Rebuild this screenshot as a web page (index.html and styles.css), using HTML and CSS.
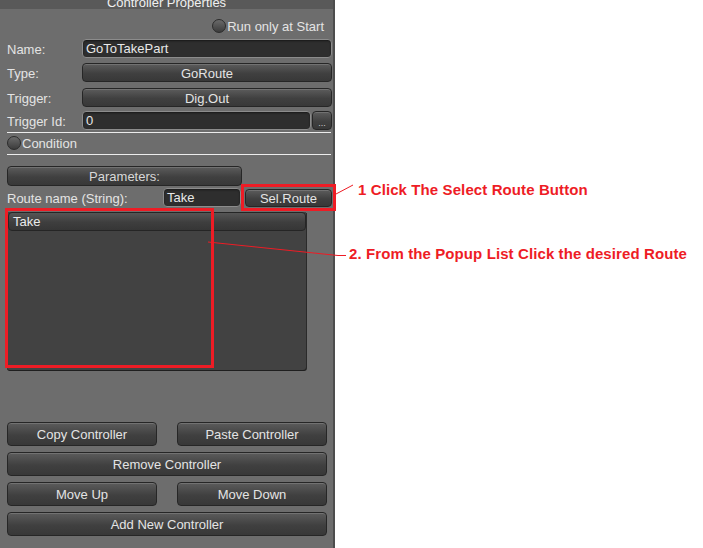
FILE: index.html
```html
<!DOCTYPE html>
<html>
<head>
<meta charset="utf-8">
<link rel="stylesheet" href="styles.css">
</head>
<body>
<div class="page">
  <div class="panel">
    <div class="header"><span class="title">Controller Properties</span></div>
    <div class="content">
      <div class="row run-row">
        <span class="check"></span><span class="lbl">Run only at Start</span>
      </div>
      <div class="row field-row r-name">
        <span class="lbl label">Name:</span>
        <div class="field">GoToTakePart</div>
      </div>
      <div class="row field-row r-type">
        <span class="lbl label">Type:</span>
        <div class="btn wide">GoRoute</div>
      </div>
      <div class="row field-row r-trigger">
        <span class="lbl label">Trigger:</span>
        <div class="btn wide">Dig.Out</div>
      </div>
      <div class="row field-row r-tid">
        <span class="lbl label">Trigger Id:</span>
        <div class="field grow">0</div>
        <div class="btn dots">...</div>
      </div>
      <div class="sep sep1"></div>
      <div class="row cond-row">
        <span class="check"></span><span class="lbl">Condition</span>
      </div>
      <div class="sep sep2"></div>
      <div class="btn params">Parameters:</div>
      <div class="row route-row">
        <span class="lbl route-label">Route name (String):</span>
        <div class="field route-field">Take</div>
        <div class="btn selroute">Sel.Route</div>
      </div>
      <div class="list">
        <div class="item">Take</div>
      </div>
      <div class="actions">
        <div class="pair">
          <div class="btn act half">Copy Controller</div>
          <div class="btn act half">Paste Controller</div>
        </div>
        <div class="btn act full">Remove Controller</div>
        <div class="pair">
          <div class="btn act half">Move Up</div>
          <div class="btn act half">Move Down</div>
        </div>
        <div class="btn act full">Add New Controller</div>
      </div>
    </div>
  </div>

  <div class="mark mark-sel"></div>
  <div class="mark mark-list"></div>
  <svg class="lines" width="703" height="548" viewBox="0 0 703 548">
    <polyline points="336,194 353,185" fill="none" stroke="#ee1c25" stroke-width="1"/>
    <polyline points="208,242 338,255.5 346,255.5" fill="none" stroke="#ee1c25" stroke-width="1"/>
  </svg>
  <div class="note note1">1 Click The Select Route Button</div>
  <div class="note note2">2. From the Popup List Click the desired Route</div>
</div>
</body>
</html>
```

FILE: styles.css
```css
html, body {
  margin: 0;
  padding: 0;
  background: #ffffff;
}

.page {
  position: relative;
  width: 703px;
  height: 548px;
  overflow: hidden;
  font-family: "Liberation Sans", Arial, sans-serif;
  font-size: 13px;
  color: #e4e4e4;
}

.panel {
  width: 333px;
  height: 548px;
  background: #6d6d6d;
  border-right: 2px solid #4d4d4d;
  display: flex;
  flex-direction: column;
}

.header {
  height: 9px;
  background: #595959;
  overflow: hidden;
  text-align: center;
}

.title {
  display: block;
  line-height: 15px;
  margin-top: -5px;
  color: #f0f0f0;
}

.content {
  padding: 0 1px 0 7px;
  display: flex;
  flex-direction: column;
}

.row {
  display: flex;
  align-items: center;
}

.lbl {
  line-height: 15px;
  white-space: nowrap;
}

.check {
  width: 12px;
  height: 12px;
  border-radius: 50%;
  border: 1px solid #2b2b2b;
  background: linear-gradient(#6a6a6a, #3c3c3c);
  box-sizing: content-box;
  margin-right: 1px;
}

.run-row {
  margin-top: 10px;
  height: 13px;
  justify-content: flex-end;
  padding-right: 8px;
}

.run-row .lbl, .cond-row .lbl {
  padding-top: 1px;
}

.field-row {
  height: 19px;
}

.label {
  width: 75px;
  flex: none;
  padding-top: 2px;
}

.r-name { margin-top: 7px; }
.r-type { margin-top: 5px; }
.r-trigger { margin-top: 6px; }
.r-tid { margin-top: 4px; }

.field {
  box-sizing: border-box;
  height: 19px;
  flex: 1;
  background: #2e2e2e;
  border: 1px solid #8c8c8c;
  border-radius: 4px;
  padding: 0 3px;
  line-height: 18px;
  color: #e8e8e8;
  box-shadow: inset 0 1px 2px rgba(0,0,0,0.5);
}

.btn {
  box-sizing: border-box;
  background: linear-gradient(#5c5c5c, #404040 55%, #383838);
  border: 1px solid #262626;
  border-radius: 4px;
  text-align: center;
  color: #e4e4e4;
  box-shadow: inset 0 1px 0 rgba(255,255,255,0.14);
}

.wide {
  flex: 1;
  height: 19px;
  line-height: 19px;
}

.grow { flex: 1; }

.dots {
  width: 20px;
  height: 19px;
  margin-left: 1px;
  font-size: 9px;
  line-height: 22px;
  color: #cfcfcf;
}

.sep {
  height: 1px;
  background: #ececec;
  margin-right: 1px;
}

.sep1 { margin-top: 2px; }
.cond-row { margin-top: 3px; height: 13px; }
.sep2 { margin-top: 5px; }

.params {
  margin-top: 11px;
  width: 235px;
  height: 20px;
  line-height: 19px;
  color: #d8d8d8;
}

.route-row {
  margin-top: 2px;
  height: 19px;
}

.route-label {
  width: 156px;
  flex: none;
  padding-top: 2px;
}

.route-field {
  flex: none;
  width: 78px;
}

.selroute {
  margin-left: 4px;
  flex: none;
  width: 87px;
  height: 18px;
  line-height: 18px;
}

.list {
  margin-top: 5px;
  width: 299px;
  height: 158px;
  box-sizing: border-box;
  background: #424242;
  border-radius: 0 0 3px 3px;
  box-shadow: 0 1px 0 #1f1f1f, 1px 1px 0 #2a2a2a;
  padding: 0 0 0 1px;
}

.item {
  box-sizing: border-box;
  height: 19px;
  background: linear-gradient(#555555, #3e3e3e 55%, #363636);
  border: 1px solid #252525;
  border-radius: 4px;
  padding-left: 4px;
  line-height: 18px;
  color: #ececec;
}

.actions {
  margin-top: 52px;
  width: 320px;
  display: flex;
  flex-direction: column;
  gap: 6px;
}

.pair {
  display: flex;
  justify-content: space-between;
}

.act {
  height: 24px;
  line-height: 24px;
}

.half { width: 150px; }
.full { width: 320px; }

.mark {
  position: absolute;
  border: 3px solid #ee1c25;
  box-sizing: border-box;
}

.mark-sel {
  left: 241px;
  top: 184px;
  width: 95px;
  height: 27px;
}

.mark-list {
  left: 5px;
  top: 208px;
  width: 209px;
  height: 160px;
}

.lines {
  position: absolute;
  left: 0;
  top: 0;
}

.note {
  position: absolute;
  font-family: "Liberation Sans", Arial, sans-serif;
  font-weight: bold;
  font-size: 15px;
  letter-spacing: 0.1px;
  line-height: 17px;
  color: #ee1c25;
  white-space: nowrap;
}

.note1 {
  left: 358px;
  top: 181px;
}

.note2 {
  left: 349px;
  top: 245px;
}
```
